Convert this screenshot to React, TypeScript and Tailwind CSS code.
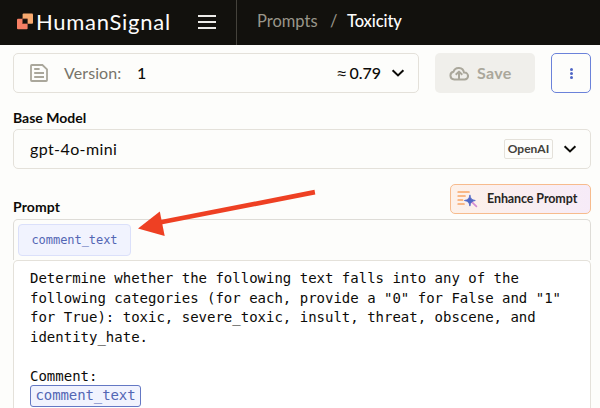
import React from "react";

const UI = "font-['Lato','Liberation_Sans',sans-serif]";
const CODE = "font-['DejaVu_Sans_Mono','Liberation_Mono',monospace]";

function Logo() {
  return (
    <svg width="16" height="17" viewBox="0 0 16 17" className="block shrink-0">
      <rect x="5.6" y="0.6" width="10.4" height="10.2" rx="1" fill="#f7a96e" />
      <rect x="0" y="5.8" width="10.6" height="10.4" rx="1" fill="#f77f64" />
      <rect x="5.7" y="5.9" width="4.8" height="4.8" fill="#12110d" stroke="#6b3c2c" strokeWidth="0.6" />
    </svg>
  );
}

function Chevron() {
  return (
    <svg width="14" height="10" viewBox="0 0 14 10" fill="none" stroke="#0c0b08" strokeWidth="2" className="block shrink-0">
      <path d="M1.6 2.2 7 7.4 12.4 2.2" />
    </svg>
  );
}

function DocumentIcon() {
  return (
    <svg width="18" height="18" viewBox="0 0 18 18" fill="none" stroke="#aaa79b" strokeWidth="1.8" className="block shrink-0">
      <path d="M1.8 1H12.4L17 5.4V16.2a.8.8 0 0 1-.8.8H1.8a.8.8 0 0 1-.8-.8V1.8A.8.8 0 0 1 1.8 1Z" />
      <path d="M4.2 5H9.6M4.2 9H14M4.2 13H14" />
    </svg>
  );
}

function CloudIcon() {
  return (
    <svg width="20" height="15" viewBox="0 0 20 15" fill="none" stroke="#aaa79b" strokeWidth="2" strokeLinejoin="round" className="block shrink-0">
      <path d="M9.5 13.5H5.2a3.9 3.9 0 0 1-.7-7.7A5.4 5.4 0 0 1 15 6.6h.6a3.4 3.4 0 0 1 0 6.9H10V6" />
      <path d="M6.7 8.8 10 5.6l3.3 3.2" />
    </svg>
  );
}

function EnhanceIcon() {
  return (
    <svg width="21" height="18" viewBox="0 0 21 18" fill="none" className="block shrink-0">
      <path d="M1.2 2H12M1.2 6H8M1.2 10H5.5M1.2 14H7" stroke="#f8a566" strokeWidth="1.7" strokeLinecap="round" />
      <path d="M14.2 11.4 19.4 16.4" stroke="#d28bd2" strokeWidth="1.7" strokeLinecap="round" />
      <path d="M12.9 4.9C13.5 8.6 14.6 9.8 18.3 10.5 14.6 11.2 13.5 12.4 12.9 16.1 12.3 12.4 11.1 11.2 7.4 10.5 11.1 9.8 12.3 8.6 12.9 4.9Z" fill="#4f66c5" stroke="#4f66c5" strokeWidth="0.8" />
    </svg>
  );
}

function Header() {
  return (
    <header className="flex h-[45px] shrink-0 bg-[#12110d]">
      <div className="flex w-[237px] items-center border-r border-[#44423b] pb-[2px] pl-[17px]">
        <Logo />
        <span className="ml-[3px] w-[136px] whitespace-nowrap text-[22px] leading-[42px] tracking-[0.72px] text-[#fdfdfc]">HumanSignal</span>
        <div className="ml-[26px] flex w-[18px] flex-col gap-[4px]">
          <div className="h-[2px] bg-[#ecebe8]" />
          <div className="h-[2px] bg-[#ecebe8]" />
          <div className="h-[2px] bg-[#ecebe8]" />
        </div>
      </div>
      <nav className="flex items-center pb-[3px] pl-[20px] text-[16.5px] leading-[42px] whitespace-nowrap">
        <span className="w-[73px] text-[#99968a]">Prompts</span>
        <span className="w-[17px] text-[#99968a]">/</span>
        <span className="tracking-[-0.1px] font-medium text-[#fdfdfc]">Toxicity</span>
      </nav>
    </header>
  );
}

function Toolbar() {
  return (
    <div className="flex h-10 gap-4 text-base">
      <div className="flex w-[406px] items-center rounded-[5px] border border-[#e4e1da] pl-4 pr-[13px]">
        <DocumentIcon />
        <span className="ml-4 w-[73px] tracking-[0.1px] text-[#77746a]">Version:</span>
        <span className="font-medium text-[#0c0b08]">1</span>
        <span className="ml-auto mr-[10px] flex items-baseline gap-[3px] whitespace-nowrap font-medium text-[#0c0b08]">
          <span className="font-['Liberation_Sans',sans-serif]">≈</span>
          <span>0.79</span>
        </span>
        <Chevron />
      </div>
      <button className="flex w-[100px] items-center rounded-[5px] bg-[#f0efeb] pl-[14px] font-bold text-[#aaa79b]">
        <CloudIcon />
        <span className="ml-[8px] tracking-[0.3px]">Save</span>
      </button>
      <button className="flex w-10 flex-col items-center justify-center gap-[1px] rounded-[5px] border border-[#6b82da]">
        <span className="size-[3px] rounded-full bg-[#4f66c5]" />
        <span className="size-[3px] rounded-full bg-[#4f66c5]" />
        <span className="size-[3px] rounded-full bg-[#4f66c5]" />
      </button>
    </div>
  );
}

function Arrow() {
  return (
    <svg width="180" height="52" viewBox="0 0 180 52" className="pointer-events-none absolute left-[137px] top-[186px]">
      <path d="M177.5 3.8 22 34.2l.9 4.6L178.3 8.5Z" fill="#ee4023" />
      <path d="M1 42.5 22.8 25.6 27.7 50Z" fill="#ee4023" />
    </svg>
  );
}

export default function App() {
  return (
    <div className={`relative flex h-[408px] w-[600px] flex-col overflow-hidden bg-[#fdfdfb] ${UI}`}>
      <Header />
      <main className="flex min-h-0 flex-1 flex-col pl-[13px] pr-[9px] pt-2">
        <Toolbar />
        <div className="mt-[15px] h-[21px] text-sm leading-[20px] font-bold text-[#0c0b08]">Base Model</div>
        <div className="flex h-10 shrink-0 items-center rounded-[5px] border border-[#e4e1da] pl-4 pr-[13px] text-base text-[#0c0b08]">
          <span className="tracking-[0.4px]">gpt-4o-mini</span>
          <span className="ml-auto mr-[10px] flex h-5 w-[49px] items-center justify-center rounded-[2px] border border-[#e4e1da] text-xs font-bold text-[#44423b]">OpenAI</span>
          <Chevron />
        </div>
        <div className="mt-[15px] flex h-[35px] shrink-0 justify-between">
          <span className="pt-[13px] text-sm leading-[20px] font-bold tracking-[0.1px] text-[#0c0b08]">Prompt</span>
          <button className="flex h-[30px] w-[141px] items-center rounded-[5px] border border-[#f7bb8d] bg-linear-to-r from-[#fdf1e9] to-[#f6ebf8] pl-[6px] text-[12.5px] font-bold tracking-[-0.1px] whitespace-nowrap text-[#28261f]">
            <EnhanceIcon />
            <span className="ml-[9px]">Enhance Prompt</span>
          </button>
        </div>
        <div className="h-[41px] shrink-0 rounded-t-[5px] border border-b-0 border-[#dedcd7] px-1 pt-1">
          <span className={`flex h-8 w-[113px] items-center justify-center rounded-[4px] border border-[#dbe0fa] bg-[#f1f3fe] text-xs tracking-[-0.05px] text-[#5366b4] ${CODE}`}>comment_text</span>
        </div>
        <div className={`min-h-0 flex-1 rounded-t-[5px] border border-b-0 border-[#e4e1da] bg-white pl-4 pt-2 text-[14px] leading-[19.6px] whitespace-pre text-[#0c0b08] ${CODE}`}>
          <div>Determine whether the following text falls into any of the</div>
          <div>following categories (for each, provide a "0" for False and "1"</div>
          <div>for True): toxic, severe_toxic, insult, threat, obscene, and</div>
          <div>identity_hate.</div>
          <div className="h-[19.6px]" />
          <div>Comment:</div>
          <span className="-mt-[1.6px] flex h-[22px] w-[111px] items-center justify-center rounded-[3px] border border-[#6478c4] bg-[#f1f3fe] tracking-[-0.1px] text-[#5366b4]">comment_text</span>
        </div>
      </main>
      <Arrow />
    </div>
  );
}
